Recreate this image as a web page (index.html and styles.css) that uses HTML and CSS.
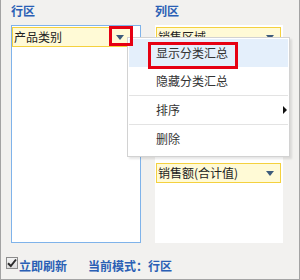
FILE: index.html
```html
<!DOCTYPE html>
<html lang="zh-CN">
<head>
    <meta charset="UTF-8">
    <title>数据透视表字段</title>
    <link rel="stylesheet" href="styles.css">
</head>
<body>
    <div class="frame">
        <div class="panel">
            <div class="col">
                <div class="col-title">行区</div>
                <div class="zone zone-active">
                    <div class="field">
                        <span class="field-name">产品类别</span>
                        <span class="caret"></span>
                    </div>
                </div>
            </div>
            <div class="col">
                <div class="col-title">列区</div>
                <div class="zone">
                    <div class="field">
                        <span class="field-name">销售区域</span>
                        <span class="caret"></span>
                    </div>
                    <div class="field field-low">
                        <span class="field-name">销售额(合计值)</span>
                        <span class="caret"></span>
                    </div>
                </div>
            </div>
        </div>

        <div class="footer">
            <label class="check">
                <span class="check-box">
                    <svg width="10" height="10" viewBox="0 0 10 10"><path d="M1 5.2 L3.8 8 L9 1.5" fill="none" stroke="#2b2b2b" stroke-width="2"/></svg>
                </span>
                立即刷新
            </label>
            <span class="mode">当前模式：行区</span>
        </div>

        <!-- context menu over the field -->
        <div class="menu">
            <div class="menu-item hover">显示分类汇总</div>
            <div class="menu-item">隐藏分类汇总</div>
            <div class="menu-sep"></div>
            <div class="menu-item">排序<span class="sub-arrow"></span></div>
            <div class="menu-sep"></div>
            <div class="menu-item">删除</div>
        </div>

        <!-- red highlight marks -->
        <div class="mark mark-caret"></div>
        <div class="mark mark-item"></div>
    </div>
</body>
</html>
```

FILE: styles.css
```css
*{
    box-sizing: border-box;
}
body{
    margin: 0;
    font-family: "Noto Sans CJK SC", "Noto Sans", sans-serif;
    font-size: 12px;
    color: #222;
}
.frame{
    position: relative;
    width: 300px;
    height: 280px;
    background-color: #f2f1ef;
    border: 1px solid #a3a3a3;
    border-top: none;
}
.panel{
    display: flex;
    gap: 14px;
    padding: 1px 0 0 10px;
}
.col-title{
    height: 20px;
    line-height: 20px;
    margin-bottom: 4px;
    font-weight: bold;
    color: #2a5fb5;
}
.col:first-child .zone{
    width: 130px;
}
.col:last-child .zone{
    width: 128px;
}
.zone{
    height: 218px;
    background-color: #fff;
    border: 1px solid #fff;
    padding: 1px 1px 0 0;
}
.zone-active{
    border-color: #7fb3ea;
}
.zone-active .field{
    width: 119px;
}
.field{
    display: flex;
    align-items: center;
    justify-content: space-between;
    height: 20px;
    width: 125px;
    padding: 0 6px 0 1px;
    background-color: #fffad6;
    border: 1px solid #f4d13f;
}
.field-low{
    margin-top: 116px;
}
.field-name{
    line-height: 18px;
}
.caret{
    width: 0;
    height: 0;
    border-left: 4px solid transparent;
    border-right: 4px solid transparent;
    border-top: 5px solid #3d5b7b;
    margin-top: 1px;
}
.footer{
    display: flex;
    align-items: center;
    height: 20px;
    margin-top: 12px;
    padding-left: 5px;
    font-weight: bold;
    color: #2a5fb5;
}
.check{
    display: flex;
    align-items: center;
}
.check-box{
    display: flex;
    align-items: center;
    justify-content: center;
    width: 12px;
    height: 12px;
    margin: -5px 1px 0 0;
    border: 1px solid #8c8c8c;
    background: linear-gradient(#f4f4f4, #dcdcdc);
}
.mode{
    margin-left: 21px;
}
.menu{
    position: absolute;
    left: 126px;
    top: 37px;
    width: 163px;
    padding: 1px 1px 3px;
    background-color: #fff;
    border: 1px solid #d2d2d2;
    box-shadow: 2px 2px 2px rgba(0,0,0,0.1);
}
.menu-item{
    position: relative;
    height: 28px;
    line-height: 28px;
    padding-left: 27px;
    color: #333;
}
.menu-item.hover{
    background-color: #e4effb;
}
.menu-sep{
    height: 1px;
    background-color: #e3e3e3;
}
.sub-arrow{
    position: absolute;
    right: 1px;
    top: 10px;
    width: 0;
    height: 0;
    border-top: 4px solid transparent;
    border-bottom: 4px solid transparent;
    border-left: 4px solid #111;
}
.mark{
    position: absolute;
    border: 3px solid #e60012;
}
.mark-caret{
    left: 108px;
    top: 26px;
    width: 24px;
    height: 20px;
}
.mark-item{
    left: 147px;
    top: 42px;
    width: 90px;
    height: 27px;
}
```
